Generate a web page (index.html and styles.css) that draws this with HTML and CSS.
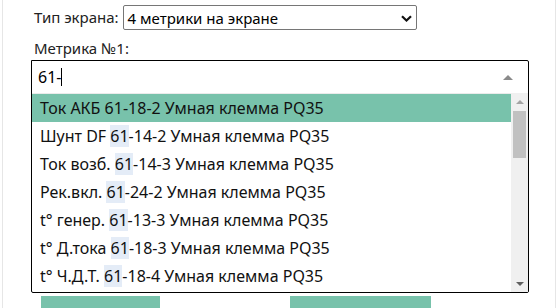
FILE: index.html
```html
<!DOCTYPE html>
<html lang="ru">
<head>
<meta charset="utf-8">
<link rel="stylesheet" href="styles.css">
</head>
<body>
<div class="frame">
  <div class="field-row">
    <label class="lbl">Тип экрана:</label>
    <div class="select">
      <span class="select-text">4 метрики на экране</span>
      <svg class="chev" width="11" height="7" viewBox="0 0 11 7"><path d="M1 1.2 L5.5 5.5 L10 1.2" fill="none" stroke="#111" stroke-width="2.2"/></svg>
    </div>
  </div>
  <div class="lbl metric-lbl">Метрика №1:</div>
  <div class="combo">
    <div class="combo-input">
      <span class="typed">61-</span><span class="caret"></span>
      <span class="spacer"></span>
      <span class="tri-up"></span>
    </div>
    <div class="listbox">
      <ul class="options">
        <li class="opt active">Ток АКБ <span class="hl">61</span>-18-2 Умная клемма PQ35</li>
        <li class="opt">Шунт DF <span class="hl">61</span>-14-2 Умная клемма PQ35</li>
        <li class="opt">Ток возб. <span class="hl">61</span>-14-3 Умная клемма PQ35</li>
        <li class="opt">Рек.вкл. <span class="hl">61</span>-24-2 Умная клемма PQ35</li>
        <li class="opt">t° генер. <span class="hl">61</span>-13-3 Умная клемма PQ35</li>
        <li class="opt">t° Д.тока <span class="hl">61</span>-18-3 Умная клемма PQ35</li>
        <li class="opt">t° Ч.Д.Т. <span class="hl">61</span>-18-4 Умная клемма PQ35</li>
      </ul>
      <div class="scrollbar">
        <div class="sb-btn"><span class="sb-up"></span></div>
        <div class="sb-thumb"></div>
        <div class="sb-track"></div>
        <div class="sb-btn sb-btn-down"><span class="sb-down"></span></div>
      </div>
    </div>
  </div>
  <div class="buttons">
    <div class="btn btn-left"></div>
    <div class="btn btn-right"></div>
  </div>
</div>
</body>
</html>
```

FILE: styles.css
```css
html, body {
  margin: 0;
  padding: 0;
  background: #fff;
  overflow: hidden;
}
body {
  font-family: "Noto Sans", "Open Sans", sans-serif;
  font-size: 15px;
  color: #212121;
}
.frame {
  margin-left: 2px;
  width: 554px;
  height: 320px;
  border-left: 1px solid #e6e6e6;
  border-right: 1px solid #e6e6e6;
  padding: 5px 0 0 28px;
  box-sizing: border-box;
}
.field-row {
  display: flex;
  align-items: center;
  gap: 4px;
  padding-left: 3px;
}
.lbl {
  color: #222;
  line-height: 25px;
}
.select {
  width: 294px;
  height: 25px;
  box-sizing: border-box;
  border: 1px solid #767676;
  border-radius: 2px;
  display: flex;
  align-items: center;
  padding: 0 4px 0 4px;
  color: #000;
}
.select-text { flex: 1; }
.chev { margin-top: 1px; }
.metric-lbl {
  padding-left: 3px;
  margin-top: 6px;
  line-height: 24px;
}
.combo {
  margin-top: 0;
  width: 498px;
  box-sizing: border-box;
  border: 1px solid #000;
  border-radius: 0 2px 2px 2px;
  font-size: 16px;
}
.combo-input {
  height: 32px;
  display: flex;
  align-items: center;
  padding: 0 15px 0 6px;
  color: #000;
}
.caret {
  display: inline-block;
  width: 1px;
  height: 18px;
  background: #000;
}
.spacer { flex: 1; }
.tri-up {
  width: 0;
  height: 0;
  border-left: 5px solid transparent;
  border-right: 5px solid transparent;
  border-bottom: 5px solid #8a8a8a;
}
.listbox {
  display: flex;
  height: 199px;
}
.options {
  list-style: none;
  margin: 0;
  padding: 0;
  flex: 1;
  border-top: 1px solid #ebebeb;
}
.opt {
  height: 28px;
  line-height: 28px;
  padding-left: 8px;
  color: #111;
  white-space: nowrap;
}
.opt.active {
  background: #78c2ab;
}
.hl {
  background: #e4ecf7;
}
.opt.active .hl {
  background: transparent;
}
.scrollbar {
  width: 17px;
  background: #f0f0f0;
  display: flex;
  flex-direction: column;
}
.sb-btn {
  height: 17px;
  display: flex;
  justify-content: center;
  align-items: center;
}
.sb-up {
  width: 0;
  height: 0;
  border-left: 4px solid transparent;
  border-right: 4px solid transparent;
  border-bottom: 4px solid #a3a3a3;
}
.sb-down {
  width: 0;
  height: 0;
  border-left: 4px solid transparent;
  border-right: 4px solid transparent;
  border-top: 4px solid #606060;
}
.sb-btn-down { align-items: flex-start; padding-top: 0; height: 10px; }
.sb-thumb {
  margin: 1px 2px 0 2px;
  height: 47px;
  background: #c1c1c1;
}
.sb-track { flex: 1; }
.buttons {
  display: flex;
  margin-top: 3px;
  padding-left: 10px;
}
.btn {
  height: 20px;
  background: #78c2ab;
}
.btn-left { width: 119px; }
.btn-right { width: 141px; margin-left: 130px; }
```
